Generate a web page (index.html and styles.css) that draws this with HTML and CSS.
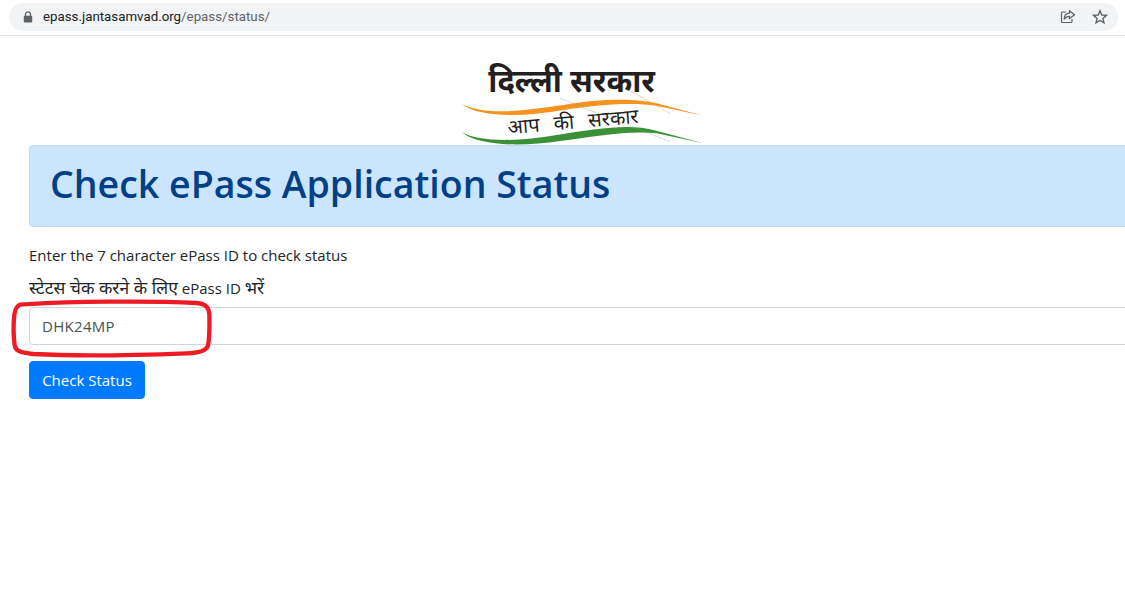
FILE: index.html
```html
<!DOCTYPE html>
<html lang="en">
<head>
    <meta charset="UTF-8">
    <meta name="viewport" content="width=device-width, initial-scale=1.0">
    <title>Check ePass Application Status</title>
    <link rel="stylesheet" href="styles.css">
</head>
<body>
    <div class="browser-bar">
        <div class="omnibox">
            <svg class="lock" width="10" height="12" viewBox="0 0 10 12">
                <path d="M2.5 5V3.4a2.5 2.5 0 0 1 5 0V5" fill="none" stroke="#5f6368" stroke-width="1.3"/>
                <rect x="0.8" y="4.8" width="8.4" height="6.6" rx="1" fill="#5f6368"/>
            </svg>
            <span class="url">epass.jantasamvad.org<span class="url-path">/epass/status/</span></span>
            <div class="omnibox-icons">
                <svg width="16" height="16" viewBox="0 0 16 16" fill="none" stroke="#5f6368" stroke-width="1.2">
                    <path d="M6 3H2.5a1 1 0 0 0-1 1v8.5a1 1 0 0 0 1 1H11a1 1 0 0 0 1-1V10"/>
                    <path d="M9.5 1.8 14.5 5.8 9.5 9.6V7.4C7 7.4 5.2 8.4 4 10.4 4.2 7 6.2 4.4 9.5 4.2Z"/>
                </svg>
                <svg width="16" height="16" viewBox="0 0 16 16" fill="none" stroke="#5f6368" stroke-width="1.4">
                    <path d="M8 1.8 9.8 6 14.4 6.4 10.9 9.4 12 13.9 8 11.5 4 13.9 5.1 9.4 1.6 6.4 6.2 6Z"/>
                </svg>
            </div>
        </div>
    </div>

    <div class="container">
        <div class="logo">
            <svg width="265" height="90" viewBox="0 0 795 270">
                <text class="logo-title" x="115" y="112" textLength="500" lengthAdjust="spacingAndGlyphs">दिल्ली सरकार</text>
                <path d="M35 148C120 185 230 165 340 150 450 130 560 130 620 145L760 182 620 152C540 140 430 150 340 165 230 185 90 190 35 148Z" fill="#f6921e"/>
                <path d="M35 232C90 262 200 260 320 240 430 222 540 205 610 225L760 265 620 235C540 225 430 245 330 258 220 275 90 275 35 232Z" fill="#3a9137"/>
                <path d="M535 105 660 175" stroke="#f6a24e" stroke-width="1.5"/>
                <path d="M330 130 660 260" stroke="#6aa86a" stroke-width="1.5" stroke-dasharray="5 3"/>
                <text class="logo-tagline" x="175" y="238" transform="rotate(-5 175 238)">आप की सरकार</text>
            </svg>
        </div>

        <div class="alert">
            <h1>Check ePass Application Status</h1>
        </div>

        <p class="hint">Enter the 7 character ePass ID to check status</p>
        <p class="hint"><span class="hi">स्टेटस चेक करने के लिए</span> ePass ID <span class="hi">भरें</span></p>

        <div class="form-group">
            <input class="form-control" type="text" value="DHK24MP">
            <svg class="marker" width="204" height="62" viewBox="30 175 612 186">
                <path d="M60 195C200 185 450 183 590 190 620 193 627 205 628 225 629 260 628 295 624 318 618 335 590 340 560 341 400 347 230 350 100 343 65 340 48 335 44 318 40 285 40 250 43 225 45 208 50 200 60 195Z" fill="none" stroke="#ed1c24" stroke-width="13"/>
            </svg>
        </div>
        <button class="btn">Check Status</button>
    </div>
</body>
</html>
```

FILE: styles.css
```css
html, body {
    overflow: hidden;
}
body {
    margin: 0;
    height: 593px;
    background: #fff;
    color: #212529;
    font-family: "Open Sans", "Noto Sans", sans-serif;
    font-size: 15px;
    line-height: 24px;
}
.browser-bar {
    height: 28px;
    padding: 3px 0 4px 9px;
    border-bottom: 1px solid #dfe1e5;
}
.omnibox {
    display: flex;
    align-items: center;
    height: 28px;
    width: 1109px;
    padding-left: 14px;
    box-sizing: border-box;
    background: #f1f3f4;
    border-radius: 14px;
}
.lock {
    margin-right: 10px;
}
.url {
    font-family: Roboto, "Liberation Sans", sans-serif;
    font-size: 13.3px;
    color: #202124;
}
.url-path {
    color: #5f6368;
}
.omnibox-icons {
    display: flex;
    gap: 16px;
    margin-left: auto;
    margin-right: 10px;
}
.container {
    width: 1106px;
    margin-left: 29px;
}
.logo {
    display: flex;
    justify-content: center;
    height: 109px;
    align-items: flex-end;
}
.logo-title {
    font-family: "Noto Sans", "Liberation Sans", sans-serif;
    font-size: 96px;
    font-weight: 700;
    fill: #231f20;
}
.logo-tagline {
    font-family: "Noto Sans", "Liberation Sans", sans-serif;
    font-size: 60px;
    word-spacing: 27px;
    fill: #231f20;
}
.alert {
    padding: 14px 20px 18px;
    margin-bottom: 16px;
    background: #cce5ff;
    border: 1px solid #b8daff;
    border-radius: 4px;
    color: #004085;
}
h1 {
    margin: 0;
    font-size: 37.5px;
    font-weight: 600;
    line-height: 48px;
}
.hint {
    height: 24px;
    margin: 0 0 8px;
}
.hi {
    font-size: 17.5px;
}
.form-group {
    position: relative;
    margin-bottom: 16px;
}
.form-control {
    display: block;
    width: 100%;
    height: 38px;
    padding: 6px 12px;
    box-sizing: border-box;
    font: inherit;
    letter-spacing: 0.3px;
    color: #495057;
    background: #fff;
    border: 1px solid #ced4da;
    border-radius: 4px;
}
/* red hand drawn ring over the input */
.marker {
    position: absolute;
    left: -19px;
    top: -9px;
}
.btn {
    display: block;
    height: 38px;
    padding: 6px 12px;
    width: 116px;
    font: inherit;
    color: #fff;
    background: #007bff;
    border: 1px solid #007bff;
    border-radius: 4px;
}
```
